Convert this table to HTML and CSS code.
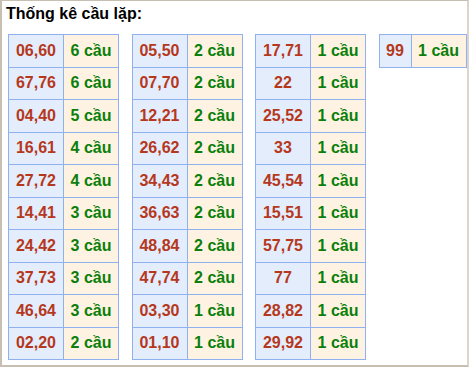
FILE: index.html
```html
<!DOCTYPE html>
<html>
<head>
<meta charset="utf-8">
<link rel="stylesheet" href="styles.css">
</head>
<body>
<div class="box">
  <div class="title">Thống kê cầu lặp:</div>
  <div class="tables">
    <table class="t">
      <tr><td class="n">06,60</td><td class="c">6 cầu</td></tr>
      <tr><td class="n">67,76</td><td class="c">6 cầu</td></tr>
      <tr><td class="n">04,40</td><td class="c">5 cầu</td></tr>
      <tr><td class="n">16,61</td><td class="c">4 cầu</td></tr>
      <tr><td class="n">27,72</td><td class="c">4 cầu</td></tr>
      <tr><td class="n">14,41</td><td class="c">3 cầu</td></tr>
      <tr><td class="n">24,42</td><td class="c">3 cầu</td></tr>
      <tr><td class="n">37,73</td><td class="c">3 cầu</td></tr>
      <tr><td class="n">46,64</td><td class="c">3 cầu</td></tr>
      <tr><td class="n">02,20</td><td class="c">2 cầu</td></tr>
    </table>
    <table class="t">
      <tr><td class="n">05,50</td><td class="c">2 cầu</td></tr>
      <tr><td class="n">07,70</td><td class="c">2 cầu</td></tr>
      <tr><td class="n">12,21</td><td class="c">2 cầu</td></tr>
      <tr><td class="n">26,62</td><td class="c">2 cầu</td></tr>
      <tr><td class="n">34,43</td><td class="c">2 cầu</td></tr>
      <tr><td class="n">36,63</td><td class="c">2 cầu</td></tr>
      <tr><td class="n">48,84</td><td class="c">2 cầu</td></tr>
      <tr><td class="n">47,74</td><td class="c">2 cầu</td></tr>
      <tr><td class="n">03,30</td><td class="c">1 cầu</td></tr>
      <tr><td class="n">01,10</td><td class="c">1 cầu</td></tr>
    </table>
    <table class="t">
      <tr><td class="n">17,71</td><td class="c">1 cầu</td></tr>
      <tr><td class="n">22</td><td class="c">1 cầu</td></tr>
      <tr><td class="n">25,52</td><td class="c">1 cầu</td></tr>
      <tr><td class="n">33</td><td class="c">1 cầu</td></tr>
      <tr><td class="n">45,54</td><td class="c">1 cầu</td></tr>
      <tr><td class="n">15,51</td><td class="c">1 cầu</td></tr>
      <tr><td class="n">57,75</td><td class="c">1 cầu</td></tr>
      <tr><td class="n">77</td><td class="c">1 cầu</td></tr>
      <tr><td class="n">28,82</td><td class="c">1 cầu</td></tr>
      <tr><td class="n">29,92</td><td class="c">1 cầu</td></tr>
    </table>
    <table class="t">
      <tr><td class="n s">99</td><td class="c">1 cầu</td></tr>
    </table>
  </div>
</div>
</body>
</html>
```
FILE: styles.css
```css
html, body {
  margin: 0;
  padding: 0;
  background: #ffffff;
}
.box {
  box-sizing: border-box;
  width: 469px;
  height: 367px;
  border-top: 1px solid #c8bfb3;
  border-left: 2px solid #c8bfb3;
  border-right: 2px solid #ddd5cc;
  border-bottom: 2px solid #c8bfb3;
  padding: 0 0 0 4px;
  font-family: "Liberation Sans", Arial, sans-serif;
}
.title {
  font-size: 16px;
  font-weight: bold;
  color: #000;
  line-height: 18px;
  padding-top: 4px;
}
.tables {
  display: flex;
  align-items: flex-start;
  gap: 12.5px;
  margin-top: 11px;
  padding-left: 2px;
}
.t {
  border-collapse: collapse;
  table-layout: fixed;
}
.t td {
  border: 1px solid #8fb1f0;
  font-size: 16px;
  font-weight: bold;
  text-align: center;
  white-space: nowrap;
  padding: 0;
  height: 32.5px;
  box-sizing: border-box;
}
.t td.n {
  width: 55px;
  background: #e3edfc;
  color: #b5381c;
}
.t td.n.s {
  width: 32px;
}
.t td.c {
  width: 55px;
  background: #fef3e2;
  color: #0b7f0b;
}
```
